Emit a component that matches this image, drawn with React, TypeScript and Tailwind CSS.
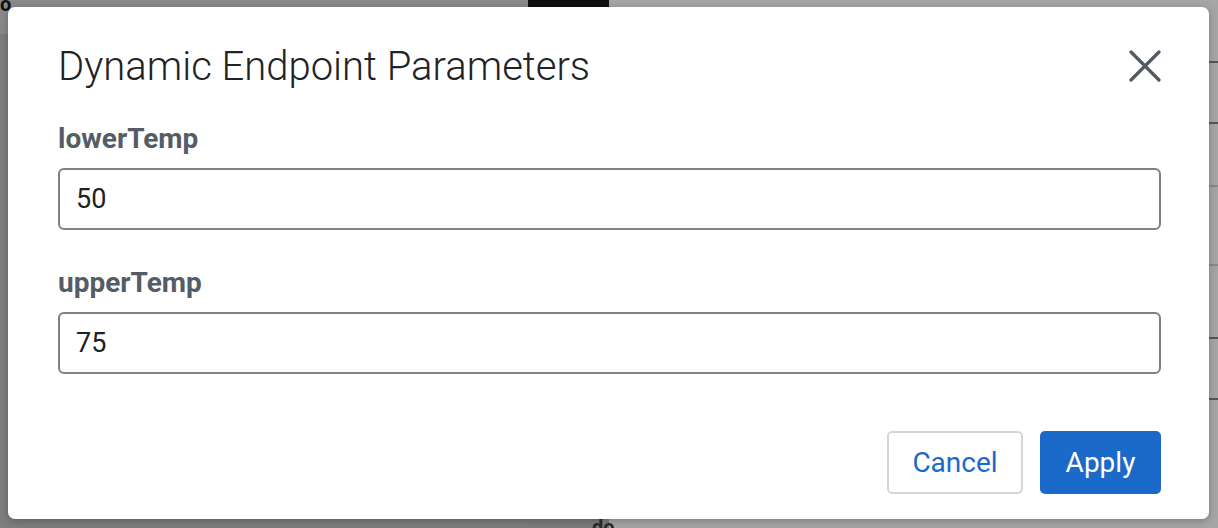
import React from "react";

export default function App() {
  return (
    <div className="relative w-[1218px] h-[528px] overflow-hidden bg-[#858585]" style={{ fontFamily: "Roboto, 'Liberation Sans', sans-serif" }}>
      {/* dimmed page behind */}
      <div className="absolute inset-0 flex">
        <div className="w-[528px] h-full bg-[#838383] flex flex-col">
          <div className="h-[34px] bg-[#8a8a8a]"></div>
          <div className="flex-1 bg-[#7e7e7e]"></div>
        </div>
        <div className="w-[81px] h-full flex flex-col bg-[#7c7c7c]">
          <div className="h-[7px] bg-[#111111]"></div>
        </div>
        <div className="flex-1 h-full bg-[#a6a6a6] flex flex-col">
          <div className="h-[61px]"></div>
          <div className="h-[2px] bg-[#555]"></div>
          <div className="h-[59px]"></div>
          <div className="h-[2px] bg-[#555]"></div>
          <div className="h-[61px]"></div>
          <div className="h-[2px] bg-[#8a8a8a]"></div>
          <div className="h-[77px]"></div>
          <div className="h-[2px] bg-[#8a8a8a]"></div>
          <div className="h-[71px]"></div>
          <div className="h-[2px] bg-[#555]"></div>
          <div className="h-[59px]"></div>
          <div className="h-[2px] bg-[#555]"></div>
        </div>
      </div>
      <div className="absolute left-0 top-[-6px] text-[20px] font-bold text-[#111] leading-none">o</div>
      <div className="absolute left-[592px] top-[517px] text-[20px] font-bold text-[#2a2a2a] leading-none">do</div>

      {/* modal */}
      <div className="absolute left-[8px] top-[7px] w-[1201px] h-[512px] bg-white rounded-[7px] shadow-[0_2px_8px_rgba(0,0,0,0.25)] pl-[50px] pr-[48px] pt-[38px]">
        <div className="flex items-start justify-between h-[44px]">
          <h1 className="text-[40px] font-light text-[#1f2326] leading-[44px]">Dynamic Endpoint Parameters</h1>
          <button className="mt-[5px] w-[32px] h-[32px] flex items-center justify-center">
            <svg width="32" height="32" viewBox="0 0 32 32" fill="none" stroke="#515a62" strokeWidth="3.2" strokeLinecap="round">
              <path d="M2 2 L30 30 M30 2 L2 30" />
            </svg>
          </button>
        </div>

        <div className="mt-[33px]">
          <label className="block text-[28px] font-bold text-[#545d65] leading-[34px]">lowerTemp</label>
          <div className="mt-[12px] h-[62px] border-2 border-[#7b8187] rounded-[6px] flex items-center px-[16px] text-[27px] text-[#1e2226]">50</div>
        </div>

        <div className="mt-[36px]">
          <label className="block text-[28px] font-bold text-[#545d65] leading-[34px]">upperTemp</label>
          <div className="mt-[12px] h-[62px] border-2 border-[#7b8187] rounded-[6px] flex items-center px-[16px] text-[27px] text-[#1e2226]">75</div>
        </div>

        <div className="mt-[57px] flex justify-end gap-[17px]">
          <button className="w-[136px] h-[63px] border-2 border-[#d3d7db] rounded-[5px] text-[28px] text-[#1b6ac9] bg-white">Cancel</button>
          <button className="w-[121px] h-[63px] rounded-[5px] text-[28px] text-white bg-[#1b6ac9]">Apply</button>
        </div>
      </div>
    </div>
  );
}
